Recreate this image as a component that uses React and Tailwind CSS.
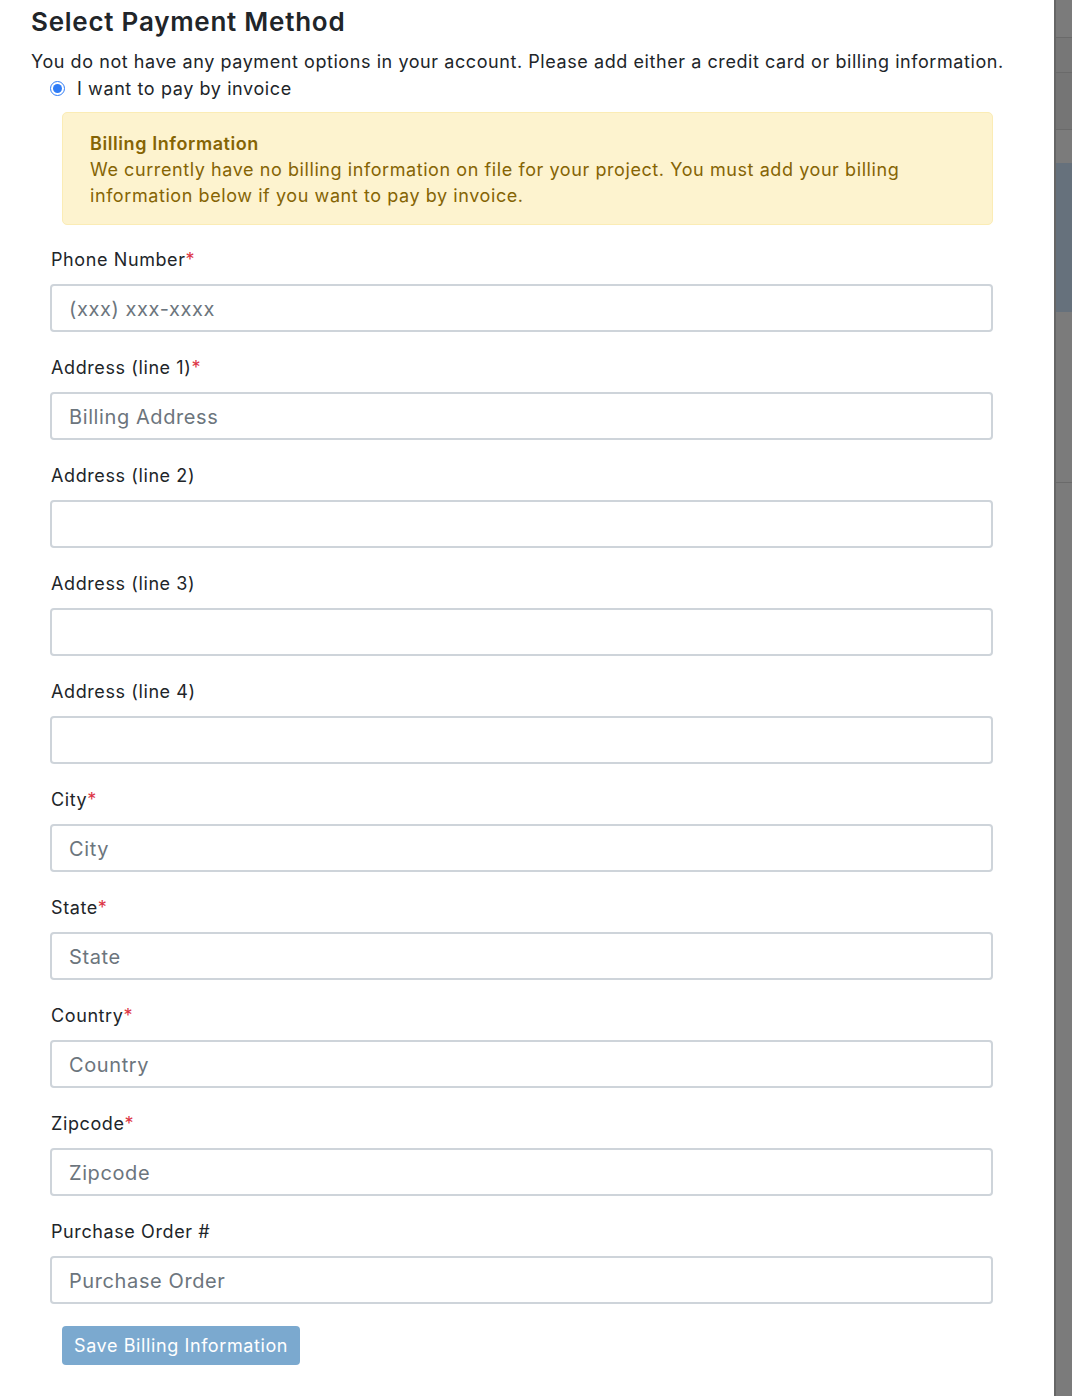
import React from 'react'

const fields = [
  { label: 'Phone Number', required: true, placeholder: '(xxx) xxx-xxxx' },
  { label: 'Address (line 1)', required: true, placeholder: 'Billing Address' },
  { label: 'Address (line 2)', required: false, placeholder: '' },
  { label: 'Address (line 3)', required: false, placeholder: '' },
  { label: 'Address (line 4)', required: false, placeholder: '' },
  { label: 'City', required: true, placeholder: 'City' },
  { label: 'State', required: true, placeholder: 'State' },
  { label: 'Country', required: true, placeholder: 'Country' },
  { label: 'Zipcode', required: true, placeholder: 'Zipcode' },
  { label: 'Purchase Order #', required: false, placeholder: 'Purchase Order' },
]

const Field = ({ label, required, placeholder }) => (
  <div className="mb-[21px]">
    <label className="block pl-[1px] pt-[2px] text-[18px] leading-[26px] tracking-[0.6px] text-[#212529] mb-[11px]">
      {label}
      {required && <span className="text-[#dc3545]">*</span>}
    </label>
    <input
      type="text"
      placeholder={placeholder}
      className="block w-full h-[48px] px-[17px] pt-[1px] text-[20px] tracking-[0.6px] text-[#495057] placeholder:text-[#6c757d] bg-white border-2 border-[#ced4da] rounded-[4px] outline-none"
    />
  </div>
)

const SideStrip = () => (
  <div className="w-[18px] shrink-0 flex flex-col border-l-2 border-[#666666] bg-[#7b7b7b]">
    <div className="h-[37px] bg-[#7b7b7b]"></div>
    <div className="h-[35px] bg-[#777777] border-t border-[#6a6a6a]"></div>
    <div className="h-[57px] bg-[#757575] border-t border-[#6a6a6a]"></div>
    <div className="h-[34px] bg-[#7b7b7b] border-t border-[#6a6a6a]"></div>
    <div className="h-[149px] bg-[#66717c]"></div>
    <div className="h-[170px] bg-[#7b7b7b]"></div>
    <div className="flex-1 bg-[#7b7b7b] border-t border-[#6a6a6a]"></div>
  </div>
)

const App = () => {
  return (
    <div className="flex min-h-[1396px] w-[1072px] overflow-hidden" style={{ fontFamily: 'Inter, "Noto Sans", sans-serif' }}>
      <div className="flex-1 bg-white pl-[31px] pt-[5px]">
        <h1 className="text-[26px] leading-[34px] font-semibold text-[#212529] tracking-[0.75px]">Select Payment Method</h1>
        <p className="mt-[10px] text-[18px] leading-[26px] tracking-[0.57px] text-[#212529] whitespace-nowrap">
          You do not have any payment options in your account. Please add either a credit card or billing information.
        </p>
        <div className="ml-[19px] w-[943px]">
          <label className="flex items-center gap-[12px] h-[26px] text-[18px] tracking-[0.6px] text-[#212529]">
            <input type="radio" defaultChecked name="pay" className="w-[15px] h-[15px] m-0 accent-[#2f7cf6]" />
            I want to pay by invoice
          </label>
          <div className="ml-[12px] mt-[11px] mb-[20px] px-[27px] pt-[18px] pb-[15px] bg-[#fdf3cf] border border-[#fbecb5] rounded-[5px] text-[#856404] text-[18px] leading-[26px] tracking-[0.58px]">
            <div className="font-semibold">Billing Information</div>
            <div>
              We currently have no billing information on file for your project. You must add your billing information below if you want to pay by invoice.
            </div>
          </div>
          {fields.map((f) => (
            <Field key={f.label} {...f} />
          ))}
          <button
            type="button"
            disabled
            className="ml-[12px] mt-[1px] h-[39px] px-[12px] rounded-[4px] bg-[#7ba9cf] text-white text-[18px] tracking-[0.6px]"
          >
            Save Billing Information
          </button>
        </div>
      </div>
      <SideStrip />
    </div>
  )
}

export default App
